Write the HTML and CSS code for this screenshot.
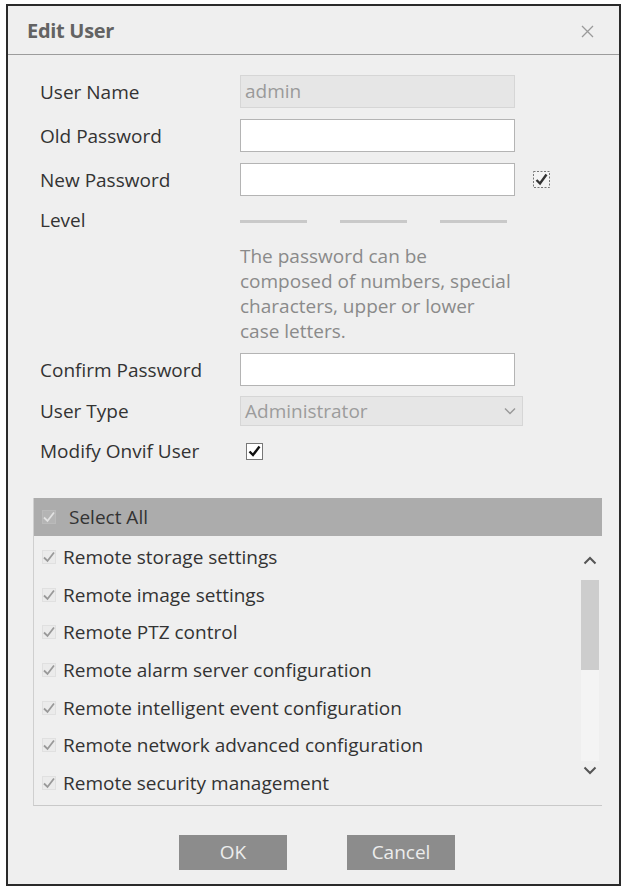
FILE: index.html
```html
<!DOCTYPE html>
<html>
<head>
<meta charset="utf-8">
<link rel="stylesheet" href="styles.css">
</head>
<body>
<div class="dialog">
  <div class="header">
    <span class="title">Edit User</span>
    <svg class="close" width="13" height="13" viewBox="0 0 13 13"><path d="M1 1L12 12M12 1L1 12" stroke="#9a9a9a" stroke-width="1.3" fill="none"/></svg>
  </div>
  <div class="form">
    <div class="row r-user">
      <span class="label">User Name</span>
      <div class="field disabled">admin</div>
    </div>
    <div class="row r-old">
      <span class="label">Old Password</span>
      <div class="field"></div>
    </div>
    <div class="row r-new">
      <span class="label">New Password</span>
      <div class="field"></div>
      <svg class="cb-focus" width="19" height="19" viewBox="0 0 19 19"><rect x="1.5" y="1.5" width="16" height="16" fill="#f4f4f4" stroke="#777" stroke-width="1" stroke-dasharray="2 1.5"/><path d="M4.5 10L8 13.5L14.5 4.5" stroke="#333" stroke-width="2.4" fill="none"/></svg>
    </div>
    <div class="row r-level">
      <span class="label">Level</span>
      <div class="bars"><span class="bar"></span><span class="bar"></span><span class="bar"></span></div>
    </div>
    <div class="row r-hint">
      <span class="label"></span>
      <div class="hint">The password can be<br>composed of numbers, special<br>characters, upper or lower<br>case letters.</div>
    </div>
    <div class="row r-confirm">
      <span class="label">Confirm Password</span>
      <div class="field"></div>
    </div>
    <div class="row r-type">
      <span class="label">User Type</span>
      <div class="select">Administrator<svg width="12" height="8" viewBox="0 0 12 8"><path d="M1 1.5L6 6.5L11 1.5" stroke="#999" stroke-width="1.5" fill="none"/></svg></div>
    </div>
    <div class="row r-onvif">
      <span class="label">Modify Onvif User</span>
      <svg class="cb" width="17" height="17" viewBox="0 0 17 17"><rect x="0.5" y="0.5" width="16" height="16" fill="#fff" stroke="#777"/><path d="M3.5 8.5L7 12L13.5 3.5" stroke="#111" stroke-width="2.4" fill="none"/></svg>
    </div>
  </div>
  <div class="list">
    <div class="list-head">
      <svg class="chk" width="14" height="14" viewBox="0 0 14 14"><rect x="0.5" y="0.5" width="13" height="13" fill="#b4b4b4" stroke="#bababa"/><path d="M2 7.5L5.5 11L12 2.5" stroke="#e2e2e2" stroke-width="1.8" fill="none"/></svg>
      <span>Select All</span>
    </div>
    <div class="list-body">
      <div class="items">
        <div class="item"><svg class="chk" width="14" height="14" viewBox="0 0 14 14"><rect x="0.5" y="0.5" width="13" height="13" fill="#ebebeb" stroke="#e0e0e0"/><path d="M2 7.5L5.5 11L12 2.5" stroke="#999" stroke-width="1.8" fill="none"/></svg><span>Remote storage settings</span></div>
        <div class="item"><svg class="chk" width="14" height="14" viewBox="0 0 14 14"><rect x="0.5" y="0.5" width="13" height="13" fill="#ebebeb" stroke="#e0e0e0"/><path d="M2 7.5L5.5 11L12 2.5" stroke="#999" stroke-width="1.8" fill="none"/></svg><span>Remote image settings</span></div>
        <div class="item"><svg class="chk" width="14" height="14" viewBox="0 0 14 14"><rect x="0.5" y="0.5" width="13" height="13" fill="#ebebeb" stroke="#e0e0e0"/><path d="M2 7.5L5.5 11L12 2.5" stroke="#999" stroke-width="1.8" fill="none"/></svg><span>Remote PTZ control</span></div>
        <div class="item"><svg class="chk" width="14" height="14" viewBox="0 0 14 14"><rect x="0.5" y="0.5" width="13" height="13" fill="#ebebeb" stroke="#e0e0e0"/><path d="M2 7.5L5.5 11L12 2.5" stroke="#999" stroke-width="1.8" fill="none"/></svg><span>Remote alarm server configuration</span></div>
        <div class="item"><svg class="chk" width="14" height="14" viewBox="0 0 14 14"><rect x="0.5" y="0.5" width="13" height="13" fill="#ebebeb" stroke="#e0e0e0"/><path d="M2 7.5L5.5 11L12 2.5" stroke="#999" stroke-width="1.8" fill="none"/></svg><span>Remote intelligent event configuration</span></div>
        <div class="item"><svg class="chk" width="14" height="14" viewBox="0 0 14 14"><rect x="0.5" y="0.5" width="13" height="13" fill="#ebebeb" stroke="#e0e0e0"/><path d="M2 7.5L5.5 11L12 2.5" stroke="#999" stroke-width="1.8" fill="none"/></svg><span>Remote network advanced configuration</span></div>
        <div class="item"><svg class="chk" width="14" height="14" viewBox="0 0 14 14"><rect x="0.5" y="0.5" width="13" height="13" fill="#ebebeb" stroke="#e0e0e0"/><path d="M2 7.5L5.5 11L12 2.5" stroke="#999" stroke-width="1.8" fill="none"/></svg><span>Remote security management</span></div>
      </div>
      <div class="scrollbar">
        <div class="sb-up"><svg width="14" height="9" viewBox="0 0 14 9"><path d="M1.5 7.5L7 2L12.5 7.5" stroke="#555" stroke-width="2" fill="none"/></svg></div>
        <div class="sb-thumb"></div>
        <div class="sb-track"></div>
        <div class="sb-down"><svg width="14" height="9" viewBox="0 0 14 9"><path d="M1.5 1.5L7 7L12.5 1.5" stroke="#555" stroke-width="2" fill="none"/></svg></div>
      </div>
    </div>
  </div>
  <div class="buttons">
    <div class="btn">OK</div>
    <div class="btn">Cancel</div>
  </div>
</div>
</body>
</html>
```
FILE: styles.css
```css
html, body {
  margin: 0;
  padding: 0;
  background: #ffffff;
}
body {
  font-family: "Open Sans", "Noto Sans", sans-serif;
  font-size: 19px;
  color: #333;
}
.dialog {
  margin: 4px 0 0 6px;
  width: 611px;
  height: 878px;
  border: 2px solid #2a2a2a;
  background: #efefef;
  display: flex;
  flex-direction: column;
}
.header {
  height: 48px;
  border-bottom: 1px solid #9c9c9c;
  display: flex;
  align-items: center;
  justify-content: space-between;
  padding: 0 25px 0 19px;
  flex-shrink: 0;
}
.title {
  font-size: 20px;
  font-weight: 700;
  color: #636363;
  letter-spacing: -0.3px;
}
.close {
  margin-top: 2px;
}
.form {
  display: flex;
  flex-direction: column;
  padding-left: 32px;
}
.row {
  display: flex;
  align-items: center;
}
.label {
  width: 200px;
  flex-shrink: 0;
  color: #333;
}
.field {
  width: 273px;
  height: 31px;
  border: 1px solid #b4b4b4;
  background: #fff;
  box-sizing: content-box;
}
.field.disabled {
  background: #e6e6e6;
  border-color: #d6d6d6;
  color: #9a9a9a;
  padding-left: 4px;
  width: 269px;
  line-height: 31px;
}
.r-user { margin-top: 20px; }
.r-old { margin-top: 11px; }
.r-new { margin-top: 11px; }
.cb-focus { margin-left: 17px; }
.r-level { margin-top: 12px; height: 24px; }
.bars {
  display: flex;
  gap: 33px;
}
.bar {
  width: 67px;
  height: 3px;
  background: #c9c9c9;
  margin-top: 2px;
}
.r-hint { margin-top: 12px; align-items: flex-start; }
.hint {
  color: #8a8a8a;
  line-height: 25px;
}
.r-confirm { margin-top: 9px; }
.r-type { margin-top: 10px; }
.select {
  width: 271px;
  height: 28px;
  border: 1px solid #d6d6d6;
  background: #e6e6e6;
  color: #9c9c9c;
  display: flex;
  align-items: center;
  justify-content: space-between;
  padding: 0 6px 0 4px;
}
.r-onvif { margin-top: 13px; height: 24px; }
.cb { margin-left: 6px; }
.list {
  margin: 35px 17px 0 25px;
  border-left: 1px solid #cfcfcf;
  border-bottom: 1px solid #c9c9c9;
}
.list-head {
  height: 38px;
  background: #acacac;
  display: flex;
  align-items: center;
  padding-left: 8px;
  gap: 13px;
  color: #333;
}
.list-body {
  display: flex;
}
.items {
  flex: 1;
  padding: 2px 0 3px;
}
.item {
  height: 37.7px;
  display: flex;
  align-items: center;
  padding-left: 8px;
  gap: 7px;
  color: #333;
}
.chk { flex-shrink: 0; }
.scrollbar {
  width: 18px;
  margin-right: 3px;
  display: flex;
  flex-direction: column;
}
.sb-up {
  height: 44px;
  display: flex;
  justify-content: center;
  padding-top: 20px;
  box-sizing: border-box;
}
.sb-thumb {
  height: 90px;
  background: #cdcdcd;
}
.sb-track {
  height: 91px;
  background: #f4f4f4;
}
.sb-down {
  flex: 1;
  display: flex;
  justify-content: center;
  padding-top: 5px;
}
.buttons {
  display: flex;
  justify-content: center;
  gap: 60px;
  margin-top: 29px;
  padding-left: 7px;
}
.btn {
  width: 108px;
  height: 35px;
  background: #8c8c8c;
  color: #ececec;
  display: flex;
  align-items: center;
  justify-content: center;
}
```
